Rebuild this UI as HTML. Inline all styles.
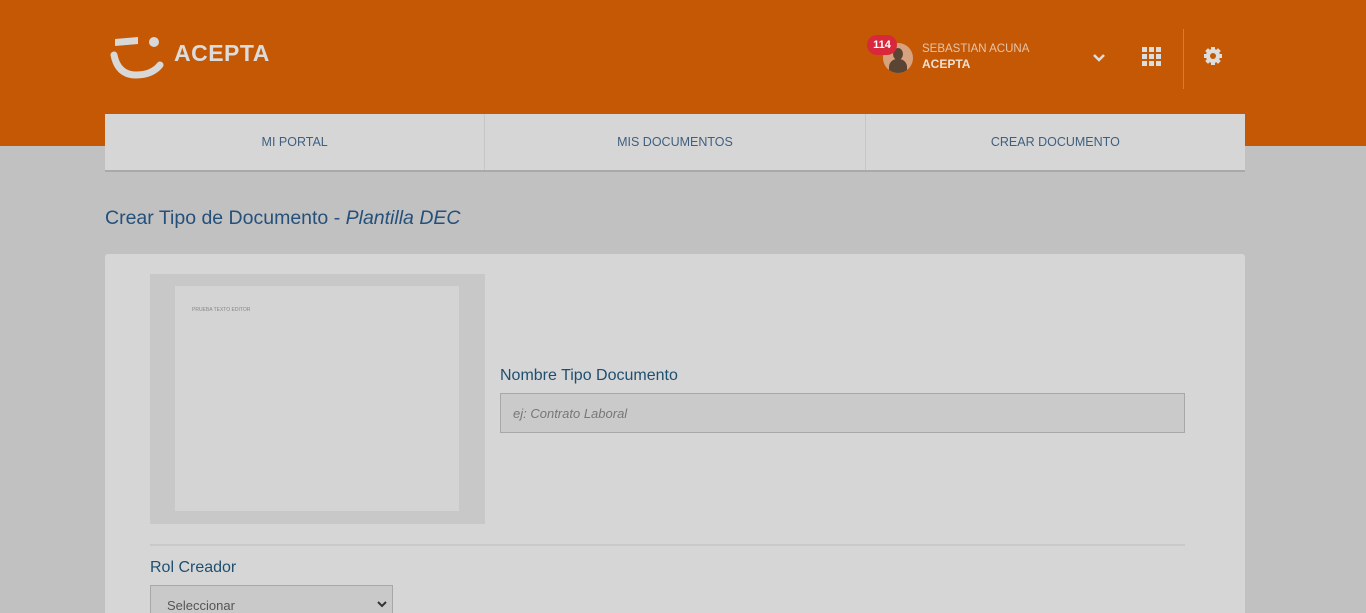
<!DOCTYPE html>
<html><head><meta charset="utf-8"><style>
*{box-sizing:border-box;margin:0;padding:0}
html,body{width:1366px;height:613px;overflow:hidden}
body{background:#c1c1c1;font-family:"Liberation Sans",sans-serif;position:relative}
.hdr{position:absolute;left:0;top:0;width:1366px;height:146px;background:#c55804}
.abs{position:absolute}
.nav{position:absolute;left:105px;top:114px;width:1140px;height:58px;background:#d6d6d6;border-bottom:2px solid #a9a9a9;display:flex}
.nav div{flex:1;text-align:center;line-height:56px;font-size:12.5px;color:#3f5f80;border-right:1px solid #c6c6c6}
.nav div:last-child{border:none}
.card{position:absolute;left:105px;top:254px;width:1140px;height:359px;background:#d6d6d6;border-radius:3px 3px 0 0}
</style></head><body>
<div class="hdr"></div>
<svg class="abs" style="left:108px;top:34px" width="60" height="46" viewBox="0 0 60 46">
<path d="M7 5 L30 3 L30 10 L7 12Z" fill="#d8d8d8"/>
<circle cx="46" cy="8" r="5" fill="#d8d8d8"/>
<path d="M6 21 Q10 41 28 41 Q44 41 52 31" stroke="#d8d8d8" stroke-width="7" fill="none" stroke-linecap="round"/>
</svg>
<div class="abs" style="left:174px;top:40px;font-size:23px;font-weight:bold;color:#dcdcdc;letter-spacing:0.5px">ACEPTA</div>
<div class="abs" style="left:883px;top:43px;width:30px;height:30px;border-radius:50%;background:#d9a27f;overflow:hidden">
<div class="abs" style="left:10px;top:5px;width:10px;height:12px;border-radius:50%;background:#5a4535"></div>
<div class="abs" style="left:6px;top:16px;width:18px;height:14px;border-radius:8px 8px 0 0;background:#5a4535"></div></div>
<div class="abs" style="left:867px;top:35px;width:30px;height:20px;border-radius:10px;background:#d8283c;color:#fff;font-size:11px;font-weight:bold;text-align:center;line-height:20px">114</div>
<div class="abs" style="left:922px;top:43px;font-size:11.5px;color:#e6c4a8">SEBASTIAN ACUNA</div>
<div class="abs" style="left:922px;top:57px;font-size:12px;font-weight:bold;color:#f0e0d0">ACEPTA</div>
<svg class="abs" style="left:1093px;top:54px" width="12" height="9"><path d="M1 1L6 6L11 1" stroke="#ddd" stroke-width="2.5" fill="none"/></svg>
<svg class="abs" style="left:1142px;top:47px" width="19" height="19" fill="#ddd"><rect x="0" y="0" width="5" height="5"/><rect x="7" y="0" width="5" height="5"/><rect x="14" y="0" width="5" height="5"/><rect x="0" y="7" width="5" height="5"/><rect x="7" y="7" width="5" height="5"/><rect x="14" y="7" width="5" height="5"/><rect x="0" y="14" width="5" height="5"/><rect x="7" y="14" width="5" height="5"/><rect x="14" y="14" width="5" height="5"/></svg>
<div class="abs" style="left:1183px;top:29px;width:1px;height:60px;background:#d87a3a"></div>
<svg class="abs" style="left:1203px;top:46px" width="20" height="20" viewBox="0 0 20 20"><g fill="#ddd"><circle cx="10" cy="10" r="7"/><g stroke="#ddd" stroke-width="4"><path d="M10 1v18M1 10h18M3.6 3.6l12.8 12.8M16.4 3.6L3.6 16.4"/></g></g><circle cx="10" cy="10" r="3" fill="#c55804"/></svg>
<div class="nav"><div>MI PORTAL</div><div>MIS DOCUMENTOS</div><div>CREAR DOCUMENTO</div></div>
<div class="abs" style="left:105px;top:207px;font-size:19.5px;color:#25507a">Crear Tipo de Documento - <i>Plantilla DEC</i></div>
<div class="card"></div>
<div class="abs" style="left:150px;top:274px;width:335px;height:250px;background:#c8c8c8"></div>
<div class="abs" style="left:175px;top:286px;width:284px;height:225px;background:#d4d4d4"></div>
<div class="abs" style="left:192px;top:307px;font-size:5px;color:#888">PRUEBA TEXTO EDITOR</div>
<div class="abs" style="left:500px;top:367px;font-size:16px;color:#1f4f70">Nombre Tipo Documento</div>
<div class="abs" style="left:500px;top:393px;width:685px;height:40px;border:1px solid #a8a8a8;background:#cacaca;font-size:13px;font-style:italic;color:#777;padding:12px 0 0 12px">ej: Contrato Laboral</div>
<div class="abs" style="left:150px;top:544px;width:1035px;height:2px;background:#c9c9c9"></div>
<div class="abs" style="left:150px;top:559px;font-size:16px;color:#1f4f70">Rol Creador</div>
<div class="abs" style="left:150px;top:585px;width:243px;height:40px;border:1px solid #a8a8a8;background:#c9c9c9;font-size:13px;color:#555;padding:12px 0 0 16px">Seleccionar</div>
<svg class="abs" style="left:377px;top:601px" width="10" height="7"><path d="M1 1L5 5L9 1" stroke="#333" stroke-width="2" fill="none"/></svg>
</body></html>
